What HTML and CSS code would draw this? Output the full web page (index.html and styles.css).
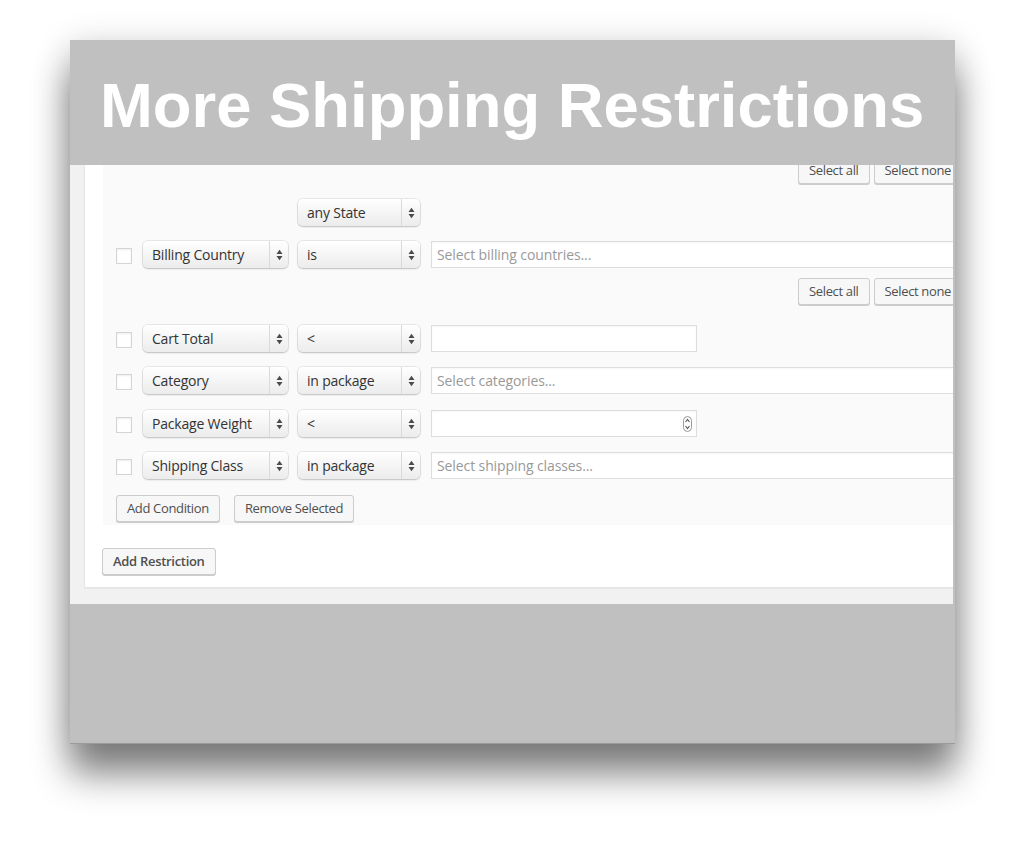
FILE: index.html
```html
<!DOCTYPE html>
<html lang="en">
<head>
<meta charset="utf-8">
<title>More Shipping Restrictions</title>
<link rel="stylesheet" href="styles.css">
</head>
<body>
<div class="page">
  <div class="card">
    <div class="banner"><h1>More Shipping Restrictions</h1></div>
    <div class="screen">
      <div class="postbox">
        <div class="conditions">
          <div class="row row-right r1">
            <span class="btn">Select all</span>
            <span class="btn">Select none</span>
          </div>
          <div class="row r2">
            <span class="select sel-op offset">
              <span class="select-label">any State</span>
              <span class="select-arrows"><svg width="7" height="12" viewBox="0 0 7 12"><polygon points="0.5,5 3.5,0.8 6.5,5" /><polygon points="0.5,7 3.5,11.2 6.5,7" /></svg></span>
            </span>
          </div>
          <div class="row r3">
            <span class="check"></span>
            <span class="select sel-type">
              <span class="select-label">Billing Country</span>
              <span class="select-arrows"><svg width="7" height="12" viewBox="0 0 7 12"><polygon points="0.5,5 3.5,0.8 6.5,5" /><polygon points="0.5,7 3.5,11.2 6.5,7" /></svg></span>
            </span>
            <span class="select sel-op">
              <span class="select-label">is</span>
              <span class="select-arrows"><svg width="7" height="12" viewBox="0 0 7 12"><polygon points="0.5,5 3.5,0.8 6.5,5" /><polygon points="0.5,7 3.5,11.2 6.5,7" /></svg></span>
            </span>
            <span class="input input-wide"><span class="placeholder">Select billing countries...</span></span>
          </div>
          <div class="row row-right r4">
            <span class="btn">Select all</span>
            <span class="btn">Select none</span>
          </div>
          <div class="row r5">
            <span class="check"></span>
            <span class="select sel-type">
              <span class="select-label">Cart Total</span>
              <span class="select-arrows"><svg width="7" height="12" viewBox="0 0 7 12"><polygon points="0.5,5 3.5,0.8 6.5,5" /><polygon points="0.5,7 3.5,11.2 6.5,7" /></svg></span>
            </span>
            <span class="select sel-op">
              <span class="select-label">&lt;</span>
              <span class="select-arrows"><svg width="7" height="12" viewBox="0 0 7 12"><polygon points="0.5,5 3.5,0.8 6.5,5" /><polygon points="0.5,7 3.5,11.2 6.5,7" /></svg></span>
            </span>
            <span class="input input-short"></span>
          </div>
          <div class="row r6">
            <span class="check"></span>
            <span class="select sel-type">
              <span class="select-label">Category</span>
              <span class="select-arrows"><svg width="7" height="12" viewBox="0 0 7 12"><polygon points="0.5,5 3.5,0.8 6.5,5" /><polygon points="0.5,7 3.5,11.2 6.5,7" /></svg></span>
            </span>
            <span class="select sel-op">
              <span class="select-label">in package</span>
              <span class="select-arrows"><svg width="7" height="12" viewBox="0 0 7 12"><polygon points="0.5,5 3.5,0.8 6.5,5" /><polygon points="0.5,7 3.5,11.2 6.5,7" /></svg></span>
            </span>
            <span class="input input-wide"><span class="placeholder">Select categories...</span></span>
          </div>
          <div class="row r7">
            <span class="check"></span>
            <span class="select sel-type">
              <span class="select-label">Package Weight</span>
              <span class="select-arrows"><svg width="7" height="12" viewBox="0 0 7 12"><polygon points="0.5,5 3.5,0.8 6.5,5" /><polygon points="0.5,7 3.5,11.2 6.5,7" /></svg></span>
            </span>
            <span class="select sel-op">
              <span class="select-label">&lt;</span>
              <span class="select-arrows"><svg width="7" height="12" viewBox="0 0 7 12"><polygon points="0.5,5 3.5,0.8 6.5,5" /><polygon points="0.5,7 3.5,11.2 6.5,7" /></svg></span>
            </span>
            <span class="input input-short input-number">
              <svg class="spinner" width="9" height="16" viewBox="0 0 9 16"><rect x="0.5" y="0.5" width="8" height="15" rx="4" ry="4" /><polyline points="2.5,6 4.5,3.5 6.5,6" /><polyline points="2.5,10 4.5,12.5 6.5,10" /></svg>
            </span>
          </div>
          <div class="row r8">
            <span class="check"></span>
            <span class="select sel-type">
              <span class="select-label">Shipping Class</span>
              <span class="select-arrows"><svg width="7" height="12" viewBox="0 0 7 12"><polygon points="0.5,5 3.5,0.8 6.5,5" /><polygon points="0.5,7 3.5,11.2 6.5,7" /></svg></span>
            </span>
            <span class="select sel-op">
              <span class="select-label">in package</span>
              <span class="select-arrows"><svg width="7" height="12" viewBox="0 0 7 12"><polygon points="0.5,5 3.5,0.8 6.5,5" /><polygon points="0.5,7 3.5,11.2 6.5,7" /></svg></span>
            </span>
            <span class="input input-wide"><span class="placeholder">Select shipping classes...</span></span>
          </div>
          <div class="row r9">
            <span class="btn">Add Condition</span>
            <span class="btn">Remove Selected</span>
          </div>
        </div>
        <div class="restriction-row">
          <span class="btn btn-bold">Add Restriction</span>
        </div>
      </div>
    </div>
  </div>
</div>
</body>
</html>
```
FILE: styles.css
```css
html, body {
  margin: 0;
  padding: 0;
  background: #ffffff;
}

body {
  font-family: "Open Sans", "DejaVu Sans", sans-serif;
  font-size: 13px;
  color: #444;
}

.page {
  width: 1024px;
  height: 844px;
  box-sizing: border-box;
  padding: 40px 0 0 70px;
  overflow: hidden;
}

.card {
  width: 885px;
  height: 703px;
  background: #c0c0c0;
  display: flex;
  flex-direction: column;
  box-shadow:
    0 1px 0 #9a9a9a,
    0 32px 34px rgba(0, 0, 0, 0.45),
    0 6px 34px rgba(0, 0, 0, 0.2);
}

.banner {
  height: 125px;
  flex: none;
  box-sizing: border-box;
  padding: 34px 0 0 30px;
}

.banner h1 {
  margin: 0;
  font-family: "Liberation Sans", Arial, sans-serif;
  font-weight: 700;
  font-size: 63.4px;
  line-height: 63px;
  color: #ffffff;
  white-space: nowrap;
}

.screen {
  width: 883px;
  height: 439px;
  flex: none;
  overflow: hidden;
  background: #f1f1f1;
}

.postbox {
  margin: -40px 0 0 14px;
  width: 920px;
  background: #ffffff;
  border: 1px solid #e5e5e5;
  box-shadow: 0 1px 1px rgba(0, 0, 0, 0.04);
  padding-bottom: 12px;
}

.conditions {
  margin-left: 18px;
  width: 868px;
  box-sizing: border-box;
  background: #fafafa;
  padding: 31px 9px 3px 13px;
}

.row {
  display: flex;
  align-items: center;
  height: 27px;
}

.row-right {
  justify-content: flex-end;
  gap: 4px;
}

.r2 { margin-top: 15px; }
.r3 { margin-top: 15px; }
.r4 { margin-top: 10px; }
.r5 { margin-top: 20px; }
.r6 { margin-top: 15px; }
.r7 { margin-top: 16px; }
.r8 { margin-top: 15px; }
.r9 { margin-top: 16px; gap: 14px; }

.btn {
  display: inline-block;
  box-sizing: border-box;
  height: 27px;
  line-height: 25px;
  padding: 0 10px;
  border: 1px solid #cccccc;
  border-radius: 3px;
  background: #f7f7f7;
  box-shadow: 0 1px 0 #cccccc;
  color: #4f4f4f;
  font-size: 13px;
  letter-spacing: -0.35px;
  white-space: nowrap;
}

.btn-bold {
  font-weight: 600;
  letter-spacing: -0.3px;
}

.restriction-row {
  margin: 23px 0 0 17px;
  display: flex;
}

.check {
  flex: none;
  width: 16px;
  height: 16px;
  box-sizing: border-box;
  border: 1px solid #d4d4d4;
  background: #ffffff;
  box-shadow: inset 0 1px 2px rgba(0, 0, 0, 0.07);
  margin-right: 11px;
  margin-top: 2px;
}

.select {
  flex: none;
  display: flex;
  align-items: stretch;
  box-sizing: border-box;
  height: 27px;
  border-radius: 5px;
  background: linear-gradient(#ffffff, #f4f4f4 55%, #ececec);
  box-shadow:
    0 0 0 1px rgba(0, 0, 0, 0.07),
    0 1px 2px rgba(0, 0, 0, 0.18);
  color: #333333;
  font-size: 14px;
  letter-spacing: -0.2px;
  margin-right: 10px;
}

.sel-type { width: 145px; }
.sel-op { width: 122px; margin-right: 11px; }
.offset { margin-left: 182px; }

.select-label {
  flex: 1;
  padding-left: 9px;
  line-height: 27px;
  white-space: nowrap;
  overflow: hidden;
}

.select-arrows {
  flex: none;
  width: 18px;
  border-left: 1px solid #dadada;
  display: flex;
  align-items: center;
  justify-content: center;
}

.select-arrows svg {
  fill: #4a4a4a;
}

.input {
  flex: none;
  box-sizing: border-box;
  height: 27px;
  border: 1px solid #dddddd;
  background: #ffffff;
  box-shadow: inset 0 1px 2px rgba(0, 0, 0, 0.04);
  display: flex;
  align-items: center;
  padding-left: 5px;
}

.input-wide {
  flex: 1;
}

.input-short {
  width: 266px;
}

.input-number {
  justify-content: flex-end;
  padding-right: 4px;
}

.spinner rect {
  fill: #ffffff;
  stroke: #9a9a9a;
  stroke-width: 1;
}

.spinner polyline {
  fill: none;
  stroke: #555555;
  stroke-width: 1.1;
}

.placeholder {
  color: #999999;
  font-size: 14px;
  letter-spacing: -0.1px;
  white-space: nowrap;
}
```
